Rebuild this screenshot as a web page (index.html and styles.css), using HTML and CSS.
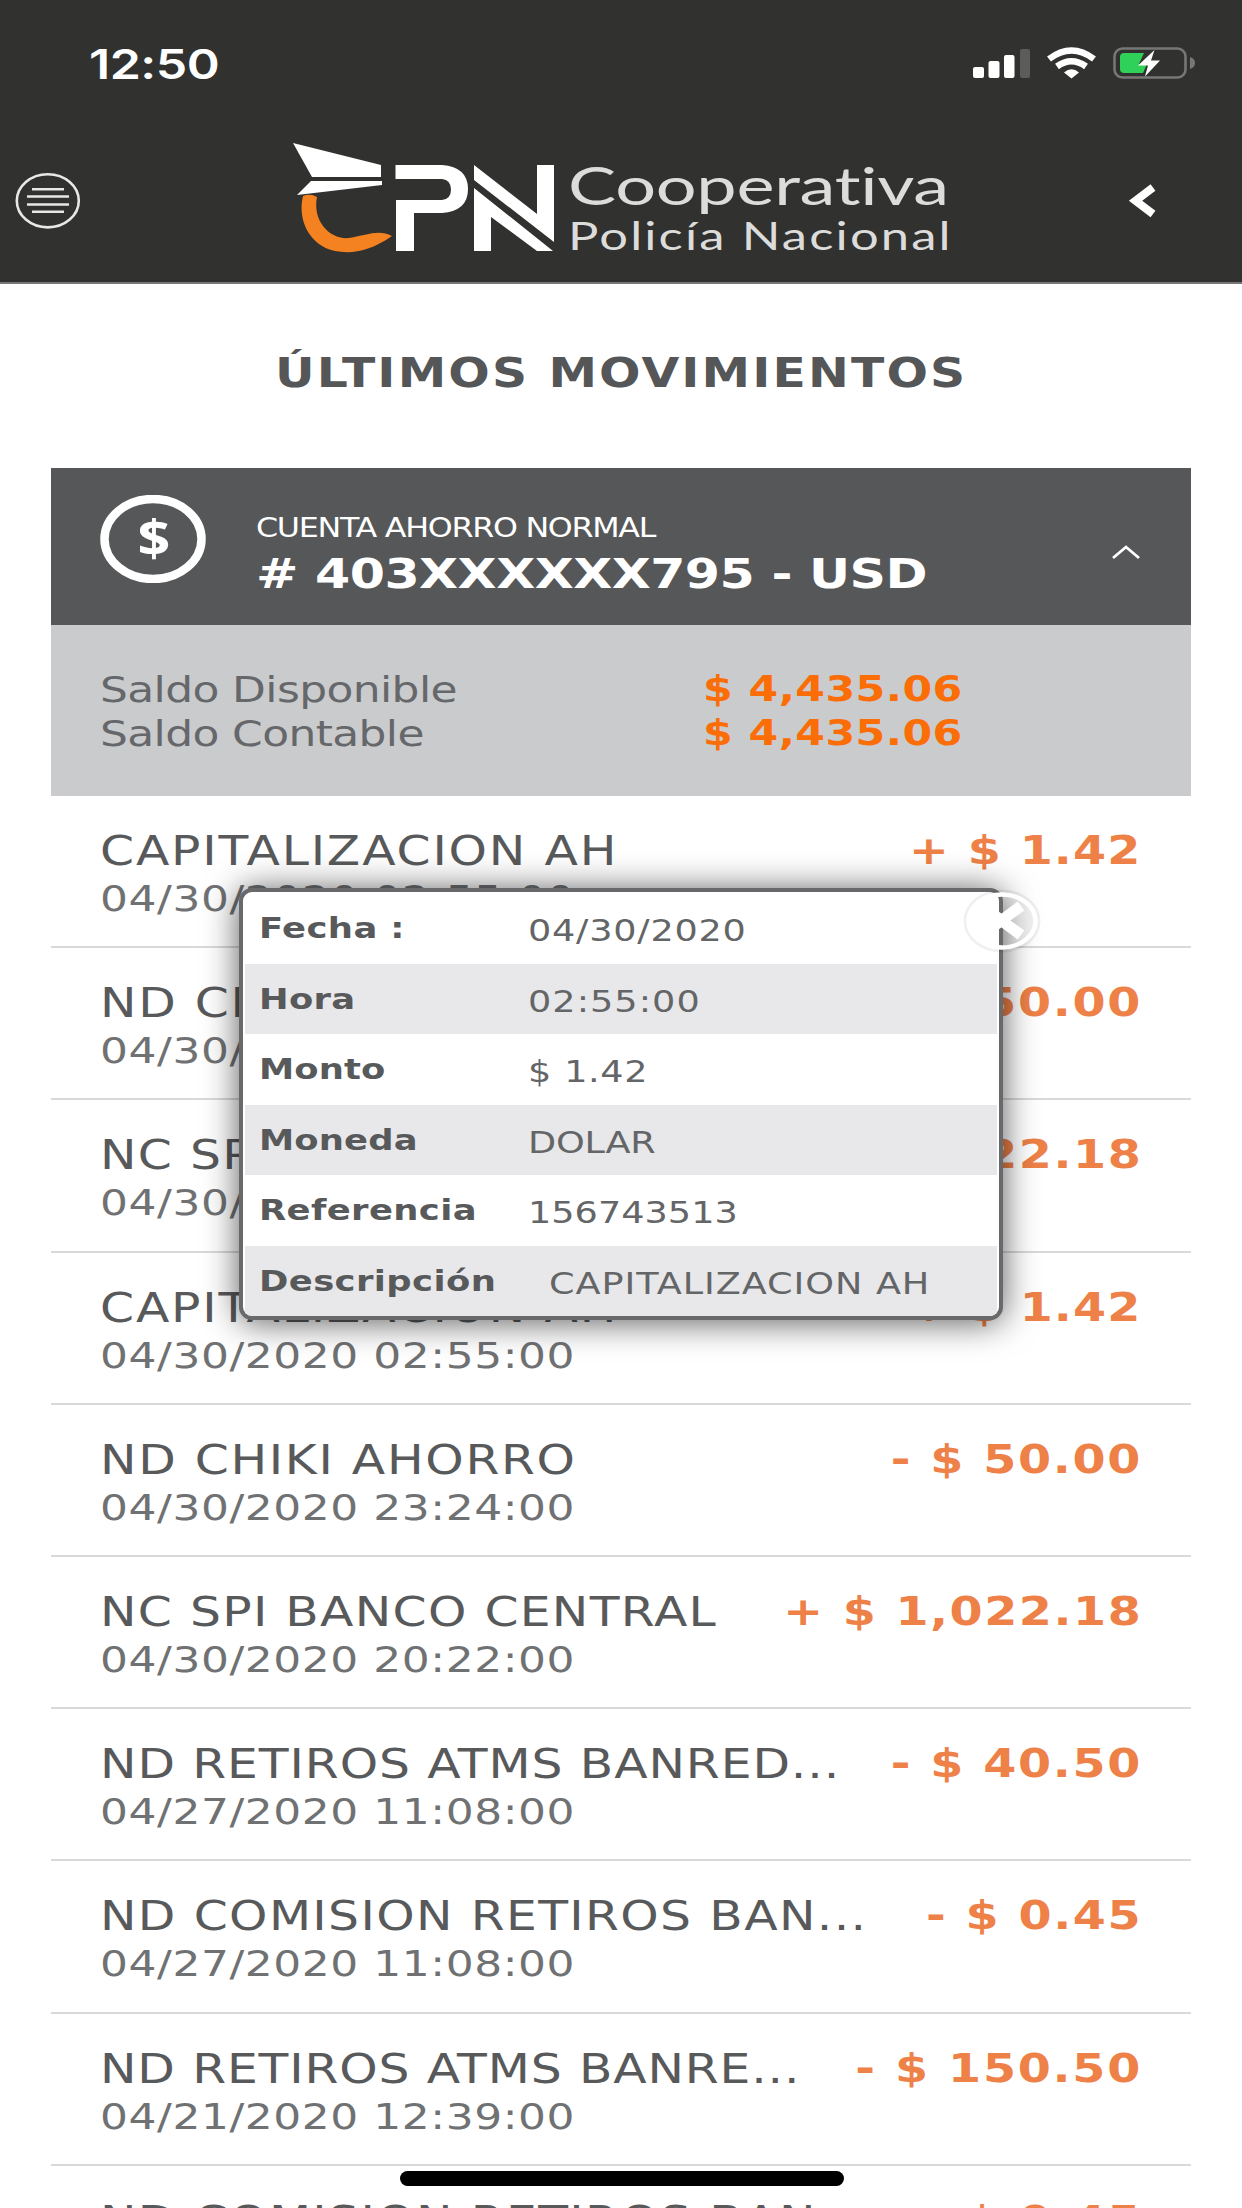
FILE: index.html
```html
<!DOCTYPE html>
<html lang="es">
<head>
<meta charset="utf-8">
<title>Últimos movimientos</title>
<link rel="stylesheet" href="styles.css">
</head>
<body>
<div class="screen">
  <header class="top">
    <div class="status">
      <span class="clock" data-w="131">12:50</span>
      <svg class="status-icons" width="226" height="36" viewBox="970 45 226 36">
        <g fill="#fff"><rect x="973" y="67" width="11" height="11" rx="2"/><rect x="988.500" y="61" width="11" height="17" rx="2"/><rect x="1004" y="55" width="10.500" height="23" rx="2"/></g>
        <rect x="1020" y="49" width="10" height="29" rx="2" fill="#5c5c5b"/>
        <g fill="none" stroke="#fff" stroke-width="6.500"><path d="M1049 59Q1071.500 42 1094 59"/><path d="M1057 66.500Q1071.500 56 1086 66.500"/></g>
        <path d="M1064 72.500Q1071.500 66 1079 72.500L1071.500 78.500Z" fill="#fff"/>
        <rect x="1114.500" y="48.500" width="71" height="29" rx="8" fill="none" stroke="#777776" stroke-width="2.600"/>
        <path d="M1190 57q5 1.500 5 6t-5 6z" fill="#777776"/>
        <path d="M1124 53h20l-5 11h8l-4 9h-19q-4 0-4-4v-12q0-4 4-4z" fill="#30d158"/>
        <path d="M1154.500 50L1138 65.500h10L1145 76.500 1160 60.500h-9z" fill="#fff"/>
      </svg>
    </div>
    <div class="brandbar">
      <svg class="menu" width="68" height="60" viewBox="14 172 68 60" fill="none" stroke="#e8e8e8" stroke-width="2.600"><ellipse cx="47.800" cy="201.800" rx="31" ry="26.600"/><path d="M32 190.300h32M27 197.500h42M27 205.500h42M32 212.700h32"/></svg>
      <div class="logo">
        <svg width="270" height="116" viewBox="292 140 270 116">
          <path d="M294 143L382 165V177H313Z" fill="#fff"/>
          <path d="M312 181H383V185L298 195Z" fill="#fff"/>
          <path d="M304 196Q311 193 318 197C313 222 332 240 350 238C368 235 380 229 393 236C370 252 352 254 336 251C311 246 298 220 304 196Z" fill="#f58220"/>
          <path d="M396.500 165H443Q469 167 469 189T443 213H415V251H397V200H443Q452 199 452 189.500T443 179H396.500Z" fill="#fff"/>
          <path d="M475 165L538 214V165H555V242L475 180Z" fill="#fff"/>
          <path d="M475 188L554 251H538L492 217V251H475Z" fill="#fff"/>
        </svg>
        <div class="brand-text">
          <span class="brand-a" data-w="382">Cooperativa</span>
          <span class="brand-b" data-w="382">Policía Nacional</span>
        </div>
      </div>
      <svg class="back" width="30" height="38" viewBox="1128 182 30 38" fill="none" stroke="#fff" stroke-width="8"><path d="M1153 187.500L1135.500 200.700 1153 214"/></svg>
    </div>
  </header>

  <main>
    <h1><span data-w="690">ÚLTIMOS MOVIMIENTOS</span></h1>
    <section class="account">
      <svg class="coin" width="106" height="88" viewBox="0 0 106 88"><ellipse cx="53" cy="44" rx="48.500" ry="40" fill="none" stroke="#fff" stroke-width="8.500"/><text transform="translate(54 61) scale(1.150 1)" text-anchor="middle">$</text></svg>
      <div class="account-text">
        <span class="kind" data-w="400">CUENTA AHORRO NORMAL</span>
        <span class="number" data-w="672"># 403XXXXXX795 - USD</span>
      </div>
      <svg class="up" width="32" height="18" viewBox="0 0 32 18" fill="none" stroke="#fff" stroke-width="2.800"><path d="M3 15L16 4 29 15"/></svg>
    </section>
    <section class="balance">
      <div class="line"><span class="b-label"><span data-w="357">Saldo Disponible</span></span><span class="b-value" data-w="259">$ 4,435.06</span></div>
      <div class="line"><span class="b-label"><span data-w="324">Saldo Contable</span></span><span class="b-value" data-w="259">$ 4,435.06</span></div>
    </section>

    <div class="movements">
      <article><div><span class="name" data-w="516">CAPITALIZACION AH</span><span class="amount" data-w="231">+ $ 1.42</span></div><span class="date" data-w="475">04/30/2020 02:55:00</span></article>
      <article><div><span class="name" data-w="475">ND CHIKI AHORRO</span><span class="amount" data-w="250">- $ 50.00</span></div><span class="date" data-w="475">04/30/2020 23:24:00</span></article>
      <article><div><span class="name" data-w="616">NC SPI BANCO CENTRAL</span><span class="amount" data-w="357">+ $ 1,022.18</span></div><span class="date" data-w="475">04/30/2020 20:22:00</span></article>
      <article><div><span class="name" data-w="516">CAPITALIZACION AH</span><span class="amount" data-w="231">+ $ 1.42</span></div><span class="date" data-w="475">04/30/2020 02:55:00</span></article>
      <article><div><span class="name" data-w="475">ND CHIKI AHORRO</span><span class="amount" data-w="250">- $ 50.00</span></div><span class="date" data-w="475">04/30/2020 23:24:00</span></article>
      <article><div><span class="name" data-w="616">NC SPI BANCO CENTRAL</span><span class="amount" data-w="357">+ $ 1,022.18</span></div><span class="date" data-w="475">04/30/2020 20:22:00</span></article>
      <article><div><span class="name" data-w="739">ND RETIROS ATMS BANRED...</span><span class="amount" data-w="250">- $ 40.50</span></div><span class="date" data-w="475">04/27/2020 11:08:00</span></article>
      <article><div><span class="name" data-w="766">ND COMISION RETIROS BAN...</span><span class="amount" data-w="215">- $ 0.45</span></div><span class="date" data-w="475">04/27/2020 11:08:00</span></article>
      <article><div><span class="name" data-w="699">ND RETIROS ATMS BANRE...</span><span class="amount" data-w="285">- $ 150.50</span></div><span class="date" data-w="475">04/21/2020 12:39:00</span></article>
      <article><div><span class="name" data-w="766">ND COMISION RETIROS BAN...</span><span class="amount" data-w="215">- $ 0.45</span></div></article>
    </div>
  </main>

  <div class="detail">
    <dl>
      <div><dt><span data-w="145">Fecha :</span></dt><dd><span data-w="218">04/30/2020</span></dd></div>
      <div><dt><span data-w="96">Hora</span></dt><dd><span data-w="172">02:55:00</span></dd></div>
      <div><dt><span data-w="126">Monto</span></dt><dd><span data-w="119">$ 1.42</span></dd></div>
      <div><dt><span data-w="158">Moneda</span></dt><dd><span data-w="127">DOLAR</span></dd></div>
      <div><dt><span data-w="218">Referencia</span></dt><dd><span data-w="210">156743513</span></dd></div>
      <div><dt><span data-w="237">Descripción</span></dt><dd class="shifted"><span data-w="381">CAPITALIZACION AH</span></dd></div>
    </dl>
    <svg class="close" width="84" height="70" viewBox="0 0 84 70">
      <ellipse cx="42" cy="35" rx="37" ry="30" fill="none" stroke="#000" stroke-opacity=".06" stroke-width="3"/>
      <path d="M43 9A33 26 0 0 1 43 61Z" fill="#000" fill-opacity=".05"/>
      <ellipse cx="42" cy="35" rx="33.500" ry="26.500" fill="none" stroke="#fff" stroke-width="4.500"/>
      <path d="M22 20L61 49M61 20L22 49" stroke="#fff" stroke-width="11"/>
    </svg>
  </div>
  <div class="home"></div>
</div>
<script src="fit.js"></script>
</body>
</html>
```
FILE: styles.css
```css
* { box-sizing: border-box; }
body { margin: 0; background: #fff; font-family: "DejaVu Sans", Verdana, sans-serif; color: #58595b; }
.screen { position: relative; width: 1242px; height: 2208px; overflow: hidden; background: #fff; }

/* Wide lettering: glyphs are stretched and then spaced to their run width */
[data-w] { --stretch: 1.22; display: inline-block; white-space: pre; transform: scaleX(var(--stretch)); transform-origin: left; }

.top { height: 284px; background: #31312f; border-bottom: 2px solid #777; display: flex; flex-direction: column; }
.status { height: 126px; padding: 0 46px 0 89px; display: flex; align-items: center; justify-content: space-between; }
.clock { font: 600 41px/50px Inter, sans-serif; color: #fff; padding-top: 1px; }
.status-icons { display: block; }
.brandbar { height: 150px; padding: 0 84px 0 14px; display: flex; align-items: center; justify-content: space-between; }
.menu { display: block; }
.logo { display: flex; height: 110px; margin-left: 41px; width: 669px; }
.logo svg { flex: none; margin-top: -6px; }
.brand-text { display: flex; flex-direction: column; align-items: flex-start; padding: 13px 0 0 7px; color: #dcdcdb; }
.brand-text .brand-a { --stretch: 1.36; font: 53px/52px Lato, sans-serif; }
.brand-text .brand-b { --stretch: 1.3; font: 39px/48px Lato, sans-serif; }

h1 { margin: 0; height: 184px; padding: 64px 0 0 275px; font-size: 40px; line-height: 50px; font-weight: 700; color: #555658; }
.account { margin: 0 51px; height: 157px; padding-left: 49px; background: #565759; color: #fff; display: flex; }
.coin { margin-top: 27px; }
.coin text { font: 700 50px "Open Sans", sans-serif; fill: #fff; }
.account-text { flex: none; width: 904px; padding: 44px 0 0 50px; display: flex; flex-direction: column; align-items: flex-start; }
.kind { font-size: 26px; line-height: 32px; }
.number { font-size: 41.500px; font-weight: 700; line-height: 52px; margin-top: 4px; }
.up { flex: none; margin-top: 75px; }
.balance { margin: 0 51px; height: 171px; padding: 43px 0 0 49px; background: #cacbcd; font-size: 36px; color: #66676a; }
.line { height: 43.500px; line-height: 43.500px; display: flex; }
.b-label { width: 603px; }
.b-value { font-size: 35px; font-weight: 700; color: #fb6d06; }

.movements { margin: 0 51px; }
article { height: 152.200px; padding: 29px 50px 0 49px; border-bottom: 2px solid #d9d9da; }
article > div { display: flex; justify-content: space-between; height: 53px; line-height: 52px; }
.name { font-size: 40px; }
.amount { font-size: 39px; font-weight: 700; color: #ee8147; }
[data-w].amount { transform-origin: right; }
.date { font-size: 36px; line-height: 42px; color: #707173; }

.detail { position: absolute; left: 239px; top: 888px; width: 764px; height: 432px; border: 4px solid #69696b; border-radius: 13px; background: #fff; box-shadow: 0 2px 34px rgba(0,0,0,.65); }
dl { margin: 0; padding: 1px 2px 0; border-radius: 9px; overflow: hidden; }
dl > div { display: flex; height: 70.500px; padding: 17px 0 0 14px; font-size: 30px; line-height: 36px; color: #646567; }
dl > div:nth-child(even) { background: #e8e8ea; }
dt { width: 269px; font-weight: 700; font-size: 29px; color: #58595b; }
dd { margin: 3px 0 0; }
dd.shifted { margin-left: 21px; }
.close { position: absolute; left: 717px; top: -6px; }
.home { position: absolute; left: 400px; top: 2171px; width: 444px; height: 15px; border-radius: 8px; background: #000; }
```
FILE: fit.js
```js
// Space each stretched run so that it takes the width given in data-w.
document.querySelectorAll("[data-w]").forEach(function (el) {
  var stretch = parseFloat(getComputedStyle(el).getPropertyValue("--stretch"));
  var gaps = el.textContent.length - 1;
  var spacing = (el.dataset.w / stretch - el.offsetWidth) / gaps;
  el.style.letterSpacing = spacing + "px";
  el.style.marginRight = -spacing + "px";
});
```
